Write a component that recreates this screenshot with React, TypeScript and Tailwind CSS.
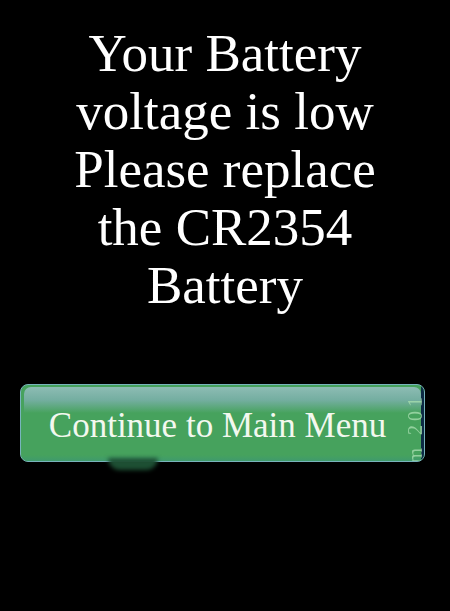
export default function App() {
  return (
    <div className="h-[611px] w-[450px] overflow-hidden bg-black" style={{ fontFamily: '"Liberation Serif", "Times New Roman", serif' }}>
      <div className="pt-[24px] text-center text-[53px] leading-[58px] text-white">
        <p>Your Battery</p>
        <p>voltage is low</p>
        <p>Please replace</p>
        <p>the CR2354</p>
        <p>Battery</p>
      </div>

      <div className="relative ml-[20px] mt-[70px] w-[405px]">
        <button
          type="button"
          className="relative flex h-[78px] w-full items-center justify-center overflow-hidden rounded-[8px] border border-[#78b4bc] bg-[#46a25d] pr-[10px] text-[35px] leading-[35px] text-[#f3f8ef]"
        >
          <span className="absolute inset-x-[3px] top-[2px] h-[26px] rounded-t-[7px] bg-gradient-to-b from-[#8dbcb4] via-[#74aea0] to-[#46a25d]" />
          <span className="absolute inset-x-0 bottom-0 h-[6px] bg-gradient-to-b from-[#46a25d] to-[#3f9a6c]" />
          <span className="relative mt-[4px]">Continue to Main Menu</span>
          <span className="absolute right-0 top-0 h-full w-[3px] bg-[#0c2a44]" />
          <span className="absolute right-[3px] top-[8px] rotate-180 whitespace-nowrap text-[20px] leading-[12px] tracking-[4px] text-[#a6dcae] opacity-80 [writing-mode:vertical-rl]">
            m 201
          </span>
        </button>
        <span className="absolute left-[88px] top-[74px] h-[12px] w-[50px] rounded-b-full bg-[#1d4f33] blur-[2px]" />
      </div>
    </div>
  )
}
